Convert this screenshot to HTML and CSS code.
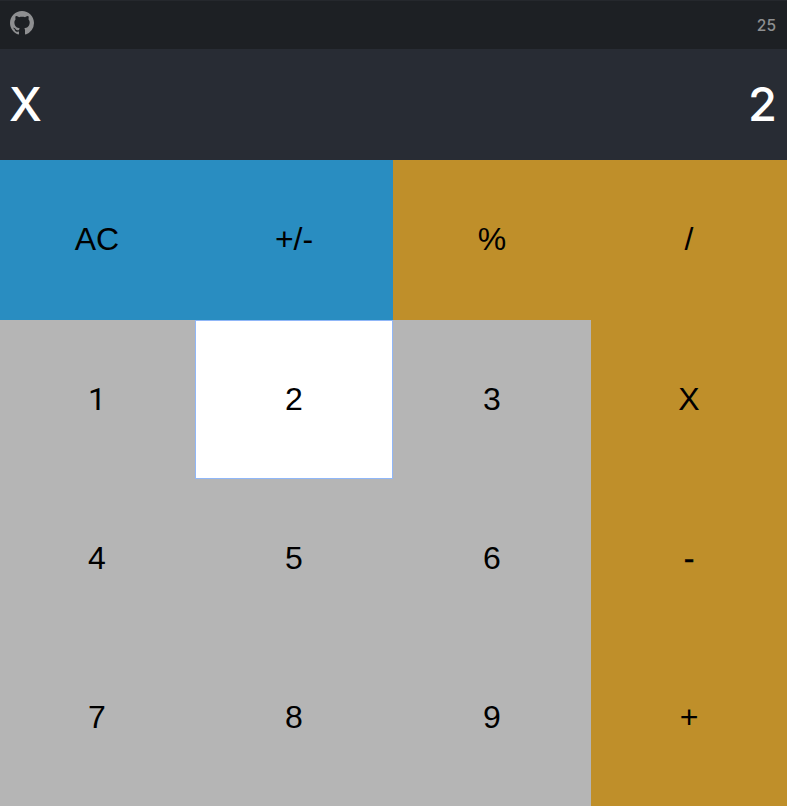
FILE: index.html
```html
<!DOCTYPE html>
<html lang="en">
<head>
<meta charset="utf-8">
<title>Calculator</title>
<link rel="stylesheet" href="styles.css">
</head>
<body>
<header class="topbar">
<svg class="logo" viewBox="0 0 16 16" aria-hidden="true"><path d="M8 0C3.58 0 0 3.58 0 8c0 3.54 2.29 6.53 5.47 7.59.4.07.55-.17.55-.38 0-.19-.01-.82-.01-1.49-2.01.37-2.53-.49-2.69-.94-.09-.23-.48-.94-.82-1.13-.28-.15-.68-.52-.01-.53.63-.01 1.08.58 1.23.82.72 1.21 1.87.87 2.33.66.07-.52.28-.87.51-1.07-1.78-.2-3.64-.89-3.64-3.95 0-.87.31-1.59.82-2.15-.08-.2-.36-1.02.08-2.12 0 0 .67-.21 2.2.82.64-.18 1.32-.27 2-.27s1.36.09 2 .27c1.53-1.04 2.2-.82 2.2-.82.44 1.1.16 1.92.08 2.12.51.56.82 1.27.82 2.15 0 3.07-1.87 3.75-3.65 3.95.29.25.54.73.54 1.48 0 1.07-.01 1.93-.01 2.2 0 .21.15.46.55.38A8.01 8.01 0 0 0 16 8c0-4.42-3.58-8-8-8z"/></svg>
<span class="count">25</span>
</header>
<section class="display"><span>X</span><span>2</span></section>
<main class="keys">
<button class="blue">AC</button><button class="blue">+/-</button><button class="gold">%</button><button class="gold">/</button>
<button class="one">1</button><button class="active">2</button><button>3</button><button class="gold">X</button>
<button>4</button><button>5</button><button>6</button><button class="gold minus">-</button>
<button>7</button><button>8</button><button>9</button><button class="gold">+</button>
</main>
</body>
</html>
```
FILE: styles.css
```css
* { box-sizing: border-box; }
body { margin: 0; height: 806px; overflow: hidden; background: #b5b5b5; font-family: Inter, sans-serif; }
.topbar { height: 49px; padding: 0 11px 4px 10px; display: flex; align-items: center; justify-content: space-between; background: #1d2024; border-top: 1px solid #25282d; color: #8e8f91; }
.logo { width: 24px; height: 24px; fill: #8e8f91; }
.count { font-size: 15.5px; font-weight: 500; padding-top: 4px; }
.display { height: 111px; padding: 0 10px 3px 9px; display: flex; align-items: center; justify-content: space-between; background: #282c34; color: #fff; font-size: 47px; font-weight: 500; }
.keys { display: grid; grid-template-columns: 195px 198px 198px 196px; grid-template-rows: 160px 159px 159px 168px; }
button { border: 0; padding: 0 0 2px; background: #b5b5b5; color: #000; font: 32px "Liberation Sans", Arial, sans-serif; }
button:nth-child(n+5) { padding-bottom: 0; }
button:nth-child(n+13) { padding-bottom: 9px; }
button:nth-child(4n+1) { padding-right: 1px; }
.blue { background: #298dc1; }
.gold { background: #bf8f2a; }
.active { background: #fff; border: 1px solid #90b7f8; }
.one { font-family: Roboto, sans-serif; }
button.one { padding-bottom: 1px; }
.minus { -webkit-text-stroke: 0.4px #000; }
```
